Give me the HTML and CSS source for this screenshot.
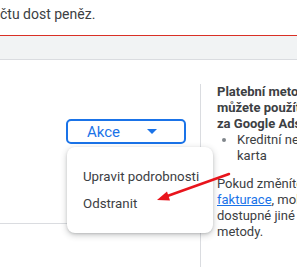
FILE: index.html
```html
<!DOCTYPE html>
<html lang="cs">
<head>
    <meta charset="UTF-8">
    <title>Fakturace</title>
    <link rel="stylesheet" href="styles.css">
</head>
<body>
    <div class="notice">čtu dost peněz.</div>
    <div class="toolbar"></div>
    <div class="content">
        <div class="left">
            <div class="card-area">
                <button class="actions">
                    <span>Akce</span>
                    <svg class="caret" width="10" height="5" viewBox="0 0 10 5"><path d="M0 0h10L5 5z" fill="#1a73e8"/></svg>
                </button>
            </div>
        </div>
        <div class="side">
            <div class="side-title">Platební metody, které<br>můžete použít k platbám<br>za Google Ads:</div>
            <ul class="methods">
                <li>Kreditní nebo debetní<br>karta</li>
            </ul>
            <p class="side-text">Pokud změníte nastavení<br><a href="#">fakturace</a>, mohou vám být<br>dostupné jiné <span class="alt">platební</span><br>metody.</p>
        </div>
    </div>

    <div class="menu">
        <div class="menu-item">Upravit podrobnosti</div>
        <div class="menu-item">Odstranit</div>
    </div>

    <svg class="arrow" width="297" height="269" viewBox="0 0 297 269">
        <line x1="229" y1="174" x2="166" y2="196.5" stroke="#e8141c" stroke-width="2.5" stroke-linecap="round"/>
        <polygon points="157,200 170,200.5 167,191.5" fill="#e8141c"/>
    </svg>
</body>
</html>
```
FILE: styles.css
```css
body {
    margin: 0;
    width: 297px;
    height: 269px;
    overflow: hidden;
    position: relative;
    background-color: #fff;
    font-family: Roboto, "Noto Sans", Arial, sans-serif;
    color: #3c4043;
}

.notice {
    height: 36px;
    padding-top: 4px;
    box-sizing: border-box;
    font-size: 14px;
    line-height: 20px;
    white-space: nowrap;
    border-bottom: 1px solid #d93025;
}

.toolbar {
    height: 24px;
    box-sizing: border-box;
    background-color: #f1f3f4;
    border-bottom: 1px solid #dadce0;
}

.content {
    display: flex;
    padding-top: 24px;
    height: 183px;
}

.left {
    width: 200px;
    flex-shrink: 0;
}

.card-area {
    height: 140px;
    box-sizing: border-box;
    border-bottom: 1px solid #dadce0;
    padding-top: 35px;
    padding-left: 66px;
}

.actions {
    width: 120px;
    height: 25px;
    box-sizing: border-box;
    border: 2px solid #1a73e8;
    border-radius: 5px;
    background: #fff;
    display: flex;
    align-items: center;
    justify-content: space-between;
    padding: 0 27px 0 19px;
    font-family: Roboto, Arial, sans-serif;
    font-size: 15px;
    color: #1a73e8;
}

.caret {
    display: block;
}

.side {
    flex: 1;
    border-left: 1px solid #dadce0;
    padding-left: 16px;
    font-size: 13px;
    line-height: 16px;
    white-space: nowrap;
}

.side-title {
    font-weight: bold;
}

.methods {
    margin: 0;
    padding-left: 20px;
}

.methods li::marker {
    color: #80868b;
}

.side-text {
    margin: 12px 0 0;
}

.side-text a {
    color: #1a73e8;
}

.alt {
    color: #f3a53c;
}

.menu {
    position: absolute;
    left: 67px;
    top: 147px;
    width: 146px;
    padding: 16px 0;
    background: #fff;
    border-radius: 8px;
    box-shadow: 0 2px 6px rgba(60, 64, 67, 0.3), 0 1px 2px rgba(60, 64, 67, 0.15);
}

.menu-item {
    height: 27px;
    line-height: 27px;
    padding-left: 16px;
    font-size: 13.3px;
    color: #3c4043;
    white-space: nowrap;
}

.arrow {
    position: absolute;
    left: 0;
    top: 0;
}
```
